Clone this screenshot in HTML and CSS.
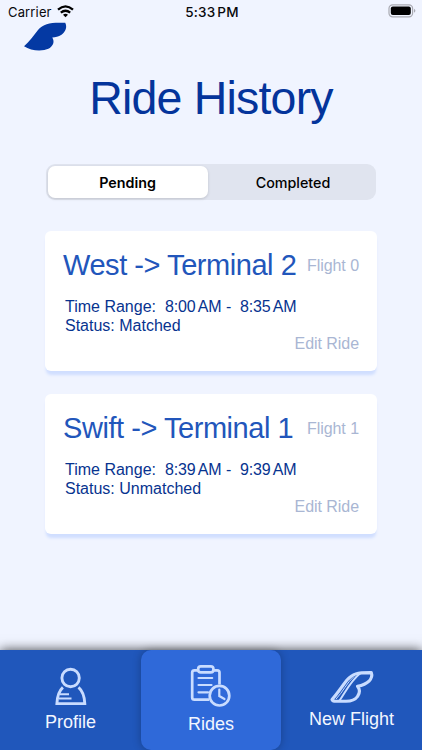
FILE: index.html
```html
<!DOCTYPE html>
<html lang="en">
<head>
<meta charset="utf-8">
<title>Ride History</title>
<link rel="stylesheet" href="styles.css">
</head>
<body>
<div class="app">
  <header class="status">
    <div class="network"><span class="carrier">Carrier</span>
      <svg class="wifi" width="17" height="13" viewBox="0 0 17 13" fill="none" stroke="#000" stroke-width="2.3"><path d="M1 4.6Q8.5-1.9 16 4.6"/><path d="M3.8 7.6Q8.5 3.8 13.2 7.6"/><path d="M8.5 12.2L6 9.7Q8.5 7.7 11 9.7Z" fill="#000" stroke="none"/></svg>
    </div>
    <time class="clock">5:33 PM</time>
    <svg class="battery" width="28" height="14" viewBox="0 0 28 14"><rect x="1" y=".8" width="23.6" height="12" rx="3.6" fill="none" stroke="#a9aab2" stroke-width="1.2"/><rect x="2.8" y="2.6" width="20" height="8.4" rx="2" fill="#000"/><path d="M26 4.8Q28.8 6.8 26 8.8Z" fill="#a9aab2"/></svg>
  </header>
  <svg class="logo" width="44" height="30" viewBox="0 0 44 30"><path d="M0 24.300C5.500 19.500 9.500 13.500 14 8C20 1.200 27 .3 41.200 .8C43.300 5 42 9.500 37.500 12.800C34.500 14.800 31.500 15.500 28.300 15.600C31 20 29 24 25 26.600C18 29.900 7 29 0 24.300Z" fill="#0439a3"/></svg>
  <h1 class="title">Ride History</h1>
  <div class="segments"><button class="segment selected">Pending</button><button class="segment">Completed</button></div>
  <main class="rides">
    <article class="card">
      <div class="heading"><h2 class="route">West -&gt; Terminal 2</h2><span class="flight">Flight 0</span></div>
      <div class="details"><p class="range"><span class="label">Time Range:</span><span class="start"><time>8:00 AM</time> -</span><time>8:35 AM</time></p><p class="state">Status: Matched</p></div>
      <a class="edit">Edit Ride</a>
    </article>
    <article class="card">
      <div class="heading"><h2 class="route">Swift -&gt; Terminal 1</h2><span class="flight">Flight 1</span></div>
      <div class="details"><p class="range"><span class="label">Time Range:</span><span class="start"><time>8:39 AM</time> -</span><time>9:39 AM</time></p><p class="state">Status: Unmatched</p></div>
      <a class="edit">Edit Ride</a>
    </article>
  </main>
  <nav class="tabs">
    <a class="tab profile"><svg width="34" height="40" viewBox="0 0 34 40" fill="none" stroke="#c9dcff" stroke-width="2.900"><circle cx="16.600" cy="11" r="8.700"/><path d="M8.900 20.300C4.800 24 3.200 30 2.900 36.600H30.800C30.500 30 28.900 24 24.500 20.300"/><path d="M6 27.300H15M5 31.600H17.500" stroke-width="2"/></svg><span>Profile</span></a>
    <a class="tab active"><svg width="42" height="44" viewBox="0 0 42 44" fill="none" stroke="#c9dcff" stroke-width="2.700"><path d="M8 6.300H4.500Q2.200 6.300 2.200 8.500V33.500Q2.200 35.700 4.500 35.700H19M23.500 6.300H27.200Q29.500 6.300 29.500 8.500V20.500"/><rect x="8.200" y="2.300" width="15.200" height="6" rx="2.600"/><path d="M8.500 14H22.200M8.500 21H21.500M8.500 28.300H18" stroke-width="2.200" stroke-linecap="round"/><circle cx="29.500" cy="31.700" r="9.800"/><path d="M29.300 25.500V32L34.500 35" stroke-linecap="round" stroke-width="2.200"/></svg><span>Rides</span></a>
    <a class="tab new"><svg width="46" height="38" viewBox="0 0 46 38" fill="none" stroke="#c9dcff" stroke-width="3.100" stroke-linejoin="round"><path d="M3 32.500C8.500 26.500 12.500 20 18 13C23.500 6.600 28 5.500 42.300 5.600C43.400 8.500 42.500 11.500 40 14.200C37 17.200 33.500 18.400 28.500 19.300C31.200 22.500 31 26 28.500 29.500C26 33.200 23 34.300 17 34.300H7Q3.500 34.300 3 32.500Z"/><path d="M10.500 33.500C16 26 21.500 14 31 6.500" stroke-width="2"/><path d="M7 32C14 25 17.500 16 25 9.500" stroke-width="1"/></svg><span>New Flight</span></a>
  </nav>
</div>
</body>
</html>
```
FILE: styles.css
```css
* { box-sizing: border-box; }
body { margin: 0; font-family: "Liberation Sans", Arial, sans-serif; }
h1, h2, p { margin: 0; font-weight: 400; }
.app { width: 422px; height: 750px; overflow: hidden; background: #f0f4ff; display: flex; flex-direction: column; }
.status { height: 22px; flex: none; display: grid; grid-template-columns: 1fr auto 1fr; align-items: start; font-family: Inter, sans-serif; padding: 4px 6px 0 8px; color: #08090c; }
.network { display: flex; gap: 5px; }
.carrier { font-size: 13px; line-height: 16px; letter-spacing: .15px; }
.wifi { margin-top: 1px; }
.clock { font-size: 13.500px; line-height: 16px; font-weight: 500; letter-spacing: .25px; word-spacing: -2px; }
.battery { justify-self: end; }
.logo { margin-left: 24px; flex: none; }
.title { height: 60px; margin-top: 16px; font-size: 46.500px; line-height: 60px; letter-spacing: -.8px; color: #04349b; text-align: center; white-space: nowrap; }
.segments { width: 330px; height: 36px; flex: none; margin: 36px 0 0 46px; padding: 2px; display: flex; border-radius: 9px; background: #e0e4ef; }
.segment { width: 160px; border: 0; padding: 0 1px 0 0; background: none; border-radius: 7px; font: 500 14.300px Inter, sans-serif; color: #000; }
.segment + .segment { width: 166px; padding-left: 5px; }
.selected { background: #fff; box-shadow: 0 1px 3px #00000026; font-weight: 600; }
.rides { margin: 31px 0 0 45px; width: 332px; display: grid; gap: 23px; }
.card { height: 140px; padding: 16px 18px 0; background: #fff; border-radius: 6px; box-shadow: 0 5px 3px -1px #d0deff; display: flex; flex-direction: column; }
.heading { display: flex; justify-content: space-between; height: 36px; white-space: nowrap; }
.route { font-size: 29px; line-height: 36px; letter-spacing: -.45px; color: #2256bb; }
.flight, .edit { font-size: 16px; line-height: 18px; letter-spacing: -.05px; color: #a9b6d3; }
.flight { margin-top: 10px; }
.details { margin: 15px 0 0 2px; font-size: 16px; line-height: 18.500px; color: #07338f; }
.range { display: flex; white-space: nowrap; }
.range time { letter-spacing: -.15px; word-spacing: -1.200px; }
.label { width: 100px; }
.start { width: 75px; }
.edit { align-self: flex-end; }
.tabs { margin-top: auto; height: 100px; flex: none; display: grid; grid-template-columns: 141px 140px 141px; background: #2057bb; box-shadow: 0 0 11px #000b; }
.tab { display: flex; flex-direction: column; align-items: center; color: #f2f6ff; font-size: 18px; line-height: 20px; padding-top: 17px; }
.tab span { margin-top: 5px; }
.active { background: #2f69d9; border-radius: 10px; padding-top: 14px; box-shadow: 0 0 8px #0004; }
.new span { margin-top: 4px; }
.active span { margin-top: 6px; }
```
